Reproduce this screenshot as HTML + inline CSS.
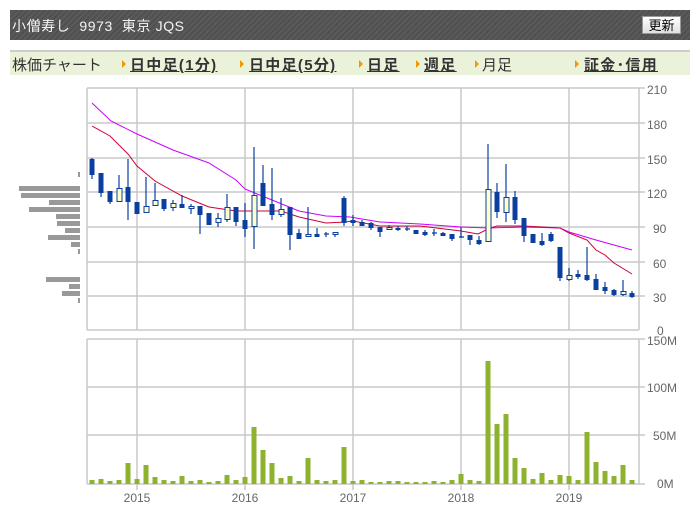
<!DOCTYPE html>
<html><head><meta charset="utf-8"><style>
body{margin:0;width:700px;height:525px;background:#fff;overflow:hidden;font-family:"Liberation Sans","Noto Sans CJK JP",sans-serif;position:relative}
.hdr{position:absolute;left:10px;top:10px;width:680px;height:30px;background:repeating-linear-gradient(135deg,#505050 0 2px,#5a5a5a 2px 4px);}
.hdr span{position:absolute;left:2px;top:6px;color:#f4f4f4;font-size:14px;letter-spacing:0.6px;white-space:pre}
.btn{position:absolute;left:632px;top:6px;width:39px;height:18px;background:linear-gradient(#fff,#e0e0e0);border:1px solid #999;font-size:13px;line-height:18px;text-align:center;color:#000;box-sizing:border-box}
.nav{position:absolute;left:10px;top:50px;width:680px;height:25px;background:#eaf2da;border-top:2px solid #ccc;box-sizing:border-box;font-size:15px;color:#333}
.nav div{position:absolute;top:2px;white-space:nowrap}
.nav b{text-decoration:underline;color:#333;letter-spacing:1.3px}
.tri{position:absolute;top:8px;width:0;height:0;border-left:4px solid #f39800;border-top:4px solid transparent;border-bottom:4px solid transparent}
svg{position:absolute;left:0;top:0}
</style></head><body>
<div class="hdr"><span>小僧寿し  9973  東京 JQS</span><div class="btn">更新</div></div>
<div class="nav">
<div style="left:2px">株価チャート</div>
<i class="tri" style="left:112px"></i><div style="left:120px"><b>日中足(1分)</b></div>
<i class="tri" style="left:230px"></i><div style="left:239px"><b>日中足(5分)</b></div>
<i class="tri" style="left:349px"></i><div style="left:357px"><b>日足</b></div>
<i class="tri" style="left:406px"></i><div style="left:414px"><b>週足</b></div>
<i class="tri" style="left:465px"></i><div style="left:472px">月足</div>
<i class="tri" style="left:565px"></i><div style="left:574px"><b>証金･信用</b></div>
</div>
<svg width="700" height="525" xmlns="http://www.w3.org/2000/svg">
<g stroke="#c8c8c8" stroke-width="1.5" fill="none">
<path d="M87 88H645M87 123H645M87 158H645M87 192H645M87 227H645M87 262H645M87 296H645M87 330H639"/>
<path d="M87 88V330M137 88V330M245 88V330M353 88V330M461 88V330M569 88V330M639 88V330"/>
<path d="M87 339H645M87 387H645M87 435H645M87 484H645"/>
<path d="M87 339V484M137 339V490M245 339V490M353 339V490M461 339V490M569 339V490M639 339V484"/>
</g>
<g fill="#666" font-size="12" font-family="Liberation Sans,sans-serif">
<text x="647" y="94">210</text><text x="647" y="129">180</text><text x="647" y="164">150</text><text x="647" y="198">120</text><text x="653" y="233">90</text><text x="653" y="268">60</text><text x="653" y="302">30</text><text x="657" y="335">0</text>
<text x="647" y="345">150M</text><text x="647" y="392">100M</text><text x="653" y="440">50M</text><text x="657" y="488">0M</text>
<text x="137" y="502" text-anchor="middle">2015</text><text x="245" y="502" text-anchor="middle">2016</text><text x="353" y="502" text-anchor="middle">2017</text><text x="461" y="502" text-anchor="middle">2018</text><text x="569" y="502" text-anchor="middle">2019</text>
</g>
<g fill="#999">
<rect x="78" y="172" width="2" height="5"/><rect x="19" y="186" width="61" height="5"/><rect x="21" y="193" width="59" height="5"/><rect x="49" y="200" width="31" height="5"/><rect x="29" y="207" width="51" height="5"/><rect x="56" y="214" width="24" height="5"/><rect x="57" y="221" width="23" height="5"/><rect x="65" y="228" width="15" height="5"/><rect x="48" y="235" width="32" height="5"/><rect x="71" y="242" width="9" height="5"/><rect x="78" y="249" width="2" height="5"/><rect x="46" y="277" width="34" height="5"/><rect x="69" y="284" width="11" height="5"/><rect x="62" y="291" width="18" height="5"/><rect x="78" y="298" width="2" height="5"/>
</g>
<polyline fill="none" stroke="#cc00ff" stroke-width="1" points="92,103 111,121 137,134 173,150 209,163 236,180 245,189 272,200 299,211 326,216 350,217 380,222 420,224 461,227 488,228 524,227 560,228 569,232 596,240 614,245 632,250"/>
<polyline fill="none" stroke="#d0003a" stroke-width="1" points="92,126 110,136 128,154 137,166 155,181 182,196 209,207 236,211 245,211 281,211 299,217 326,223 345,222 353,221 380,226 420,226 461,231 478,234 488,229 497,226 524,226 560,228 569,233 587,240 596,250 605,255 614,263 632,274"/>
<g stroke="#0b3f9f" stroke-width="1.2">
<path d="M92 158V179M101 173V197M110 191V204M119 175V202M128 159V220M137 202V214M146 177V213M155 183V206M164 199V211M173 200V211M182 195V208M191 204V214M200 206V234M209 213V225M218 213V227M227 194V222M236 207V226M245 203V237M254 147V249M263 165V206M272 168V220M281 198V217M290 207V250M299 229V239M308 207V237M317 228V237M326 232V237M335 232V237M344 196V226M353 215V226M362 220V226M371 222V230M380 227V237M389 225V230M398 226V231M407 226V231M416 230V234M425 230V236M434 229V236M443 232V236M452 234V241M461 227V238M470 235V245M479 236V245M488 144V242M497 183V218M506 164V222M515 191V224M524 218V242M533 234V243M542 233V246M551 232V242M560 247V281M569 268V281M578 270V279M587 247V281M596 274V290M605 282V294M614 289V296M623 280V296M632 291V298"/>
<path d="M324 234H329M405 229H410M432 233H437M459 237H464"/>
</g>
<g fill="#0b3f9f">
<rect x="89.5" y="159" width="5" height="16"/><rect x="98.5" y="173" width="5" height="20"/><rect x="107.5" y="191" width="5" height="11"/><rect x="125.5" y="187" width="5" height="15"/><rect x="134.5" y="202" width="5" height="12"/><rect x="161.5" y="199" width="5" height="10"/><rect x="179.5" y="204" width="5" height="4"/><rect x="197.5" y="206" width="5" height="9"/><rect x="206.5" y="213" width="5" height="12"/><rect x="233.5" y="207" width="5" height="15"/><rect x="242.5" y="220" width="5" height="9"/><rect x="260.5" y="183" width="5" height="23"/><rect x="269.5" y="204" width="5" height="11"/><rect x="287.5" y="207" width="5" height="28"/><rect x="296.5" y="233" width="5" height="6"/><rect x="314.5" y="234" width="5" height="3"/><rect x="341.5" y="198" width="5" height="25"/><rect x="350.5" y="220" width="5" height="3"/><rect x="359.5" y="222" width="5" height="4"/><rect x="368.5" y="223" width="5" height="5"/><rect x="377.5" y="227" width="5" height="5"/><rect x="395.5" y="228" width="5" height="2"/><rect x="413.5" y="230" width="5" height="4"/><rect x="422.5" y="232" width="5" height="3"/><rect x="440.5" y="233" width="5" height="3"/><rect x="449.5" y="234" width="5" height="5"/><rect x="467.5" y="235" width="5" height="5"/><rect x="476.5" y="240" width="5" height="4"/><rect x="494.5" y="192" width="5" height="20"/><rect x="512.5" y="197" width="5" height="23"/><rect x="521.5" y="218" width="5" height="18"/><rect x="530.5" y="234" width="5" height="9"/><rect x="539.5" y="241" width="5" height="4"/><rect x="548.5" y="234" width="5" height="7"/><rect x="557.5" y="247" width="5" height="31"/><rect x="575.5" y="274" width="5" height="3"/><rect x="584.5" y="275" width="5" height="5"/><rect x="593.5" y="279" width="5" height="11"/><rect x="602.5" y="287" width="5" height="4"/><rect x="611.5" y="290" width="5" height="5"/><rect x="629.5" y="293" width="5" height="4"/>
</g>
<g fill="#ffffcc" stroke="#0b3f9f" stroke-width="1">
<rect x="117" y="188.5" width="5" height="13"/><rect x="144" y="206.5" width="5" height="6"/><rect x="153" y="200.5" width="5" height="5"/><rect x="171" y="203.5" width="5" height="4"/><rect x="189" y="206.5" width="5" height="2"/><rect x="216" y="218.5" width="5" height="4"/><rect x="225" y="207.5" width="5" height="12"/><rect x="252" y="195.5" width="5" height="31"/><rect x="279" y="209.5" width="5" height="5"/><rect x="306" y="234.5" width="5" height="2"/><rect x="333" y="232.5" width="5" height="2"/><rect x="387" y="227.5" width="5" height="2"/><rect x="486" y="189.5" width="5" height="52"/><rect x="504" y="197.5" width="5" height="15"/><rect x="567" y="275.5" width="5" height="4"/><rect x="621" y="291.5" width="5" height="3"/>
</g>
<g fill="#8db22e">
<rect x="89.5" y="480" width="5" height="4"/><rect x="98.5" y="479" width="5" height="5"/><rect x="107.5" y="481" width="5" height="3"/><rect x="116.5" y="480" width="5" height="4"/><rect x="125.5" y="463" width="5" height="21"/><rect x="134.5" y="479" width="5" height="5"/><rect x="143.5" y="465" width="5" height="19"/><rect x="152.5" y="477" width="5" height="7"/><rect x="161.5" y="480" width="5" height="4"/><rect x="170.5" y="481" width="5" height="3"/><rect x="179.5" y="476" width="5" height="8"/><rect x="188.5" y="481" width="5" height="3"/><rect x="197.5" y="480" width="5" height="4"/><rect x="206.5" y="482" width="5" height="2"/><rect x="215.5" y="481" width="5" height="3"/><rect x="224.5" y="475" width="5" height="9"/><rect x="233.5" y="480" width="5" height="4"/><rect x="242.5" y="477" width="5" height="7"/><rect x="251.5" y="427" width="5" height="57"/><rect x="260.5" y="450" width="5" height="34"/><rect x="269.5" y="463" width="5" height="21"/><rect x="278.5" y="478" width="5" height="6"/><rect x="287.5" y="476" width="5" height="8"/><rect x="296.5" y="481" width="5" height="3"/><rect x="305.5" y="458" width="5" height="26"/><rect x="314.5" y="480" width="5" height="4"/><rect x="323.5" y="481" width="5" height="3"/><rect x="332.5" y="480" width="5" height="4"/><rect x="341.5" y="447" width="5" height="37"/><rect x="350.5" y="481" width="5" height="3"/><rect x="359.5" y="480" width="5" height="4"/><rect x="368.5" y="482" width="5" height="2"/><rect x="377.5" y="482" width="5" height="2"/><rect x="386.5" y="481" width="5" height="3"/><rect x="395.5" y="481" width="5" height="3"/><rect x="404.5" y="482" width="5" height="2"/><rect x="413.5" y="482" width="5" height="2"/><rect x="422.5" y="482" width="5" height="2"/><rect x="431.5" y="481" width="5" height="3"/><rect x="440.5" y="482" width="5" height="2"/><rect x="449.5" y="480" width="5" height="4"/><rect x="458.5" y="474" width="5" height="10"/><rect x="467.5" y="480" width="5" height="4"/><rect x="476.5" y="481" width="5" height="3"/><rect x="485.5" y="361" width="5" height="123"/><rect x="494.5" y="424" width="5" height="60"/><rect x="503.5" y="414" width="5" height="70"/><rect x="512.5" y="458" width="5" height="26"/><rect x="521.5" y="468" width="5" height="16"/><rect x="530.5" y="479" width="5" height="5"/><rect x="539.5" y="473" width="5" height="11"/><rect x="548.5" y="480" width="5" height="4"/><rect x="557.5" y="475" width="5" height="9"/><rect x="566.5" y="476" width="5" height="8"/><rect x="575.5" y="480" width="5" height="4"/><rect x="584.5" y="432" width="5" height="52"/><rect x="593.5" y="462" width="5" height="22"/><rect x="602.5" y="471" width="5" height="13"/><rect x="611.5" y="476" width="5" height="8"/><rect x="620.5" y="465" width="5" height="19"/><rect x="629.5" y="480" width="5" height="4"/>
</g>
</svg>
</body></html>
